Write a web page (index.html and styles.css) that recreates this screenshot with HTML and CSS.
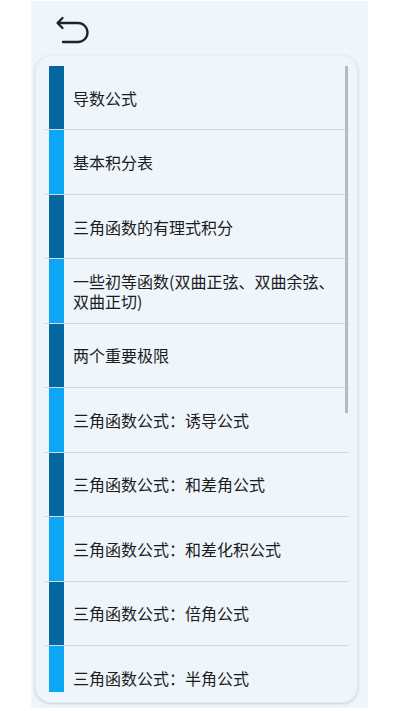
FILE: index.html
```html
<!DOCTYPE html>
<html lang="zh">
<head>
<meta charset="utf-8">
<link rel="stylesheet" href="styles.css">
</head>
<body>
<div class="app">
  <div class="header">
    <svg class="back" width="34" height="30" viewBox="0 0 34 30">
      <path d="M7.5 3 L2.5 8 L7.5 13 M3 8 H23 A9.5 9.5 0 0 1 23 27 H8" fill="none" stroke="#222" stroke-width="2.3" stroke-linecap="round" stroke-linejoin="round"/>
    </svg>
  </div>
  <div class="card">
    <div class="list">
      <div class="row"><span class="bar dark"></span><span class="label">导数公式</span></div>
      <div class="row"><span class="bar light"></span><span class="label">基本积分表</span></div>
      <div class="row"><span class="bar dark"></span><span class="label">三角函数的有理式积分</span></div>
      <div class="row"><span class="bar light"></span><span class="label">一些初等函数(双曲正弦、双曲余弦、双曲正切)</span></div>
      <div class="row"><span class="bar dark"></span><span class="label">两个重要极限</span></div>
      <div class="row"><span class="bar light"></span><span class="label">三角函数公式：诱导公式</span></div>
      <div class="row"><span class="bar dark"></span><span class="label">三角函数公式：和差角公式</span></div>
      <div class="row"><span class="bar light"></span><span class="label">三角函数公式：和差化积公式</span></div>
      <div class="row"><span class="bar dark"></span><span class="label">三角函数公式：倍角公式</span></div>
      <div class="row"><span class="bar light"></span><span class="label">三角函数公式：半角公式</span></div>
      <div class="scroll"></div>
    </div>
  </div>
</div>
</body>
</html>
```
FILE: styles.css
```css
html, body {
  margin: 0;
  padding: 0;
  background: #ffffff;
}
body {
  font-family: "Noto Sans CJK SC", "Noto Sans", sans-serif;
  color: #1c1c1c;
}
.app {
  width: 337px;
  height: 707px;
  margin: 1px auto 0 31px;
  background: #eef5fb;
  display: flex;
  flex-direction: column;
  overflow: hidden;
}
.header {
  height: 54px;
  padding: 14px 0 0 24px;
  box-sizing: border-box;
  display: flex;
  align-items: flex-start;
}
.back {
  display: block;
}
.card {
  margin: 0 10px 0 4px;
  height: 648px;
  box-sizing: border-box;
  border-radius: 16px;
  background: #eef5fb;
  border: 1px solid #e6edf3;
  box-shadow: 0 1px 3px rgba(0, 0, 0, 0.16);
  padding: 10px 8px 10px 9px;
  overflow: hidden;
}
.list {
  position: relative;
  height: 626px;
  overflow: hidden;
}
.row {
  display: flex;
  align-items: stretch;
  height: 64.44px;
  box-sizing: border-box;
  border-bottom: 1px solid #d2d9df;
  padding-left: 4px;
}
.bar {
  flex: 0 0 15px;
  width: 15px;
}
.bar.dark { background: #0467a2; }
.bar.light { background: #0da6f6; }
.label {
  flex: 1;
  display: flex;
  align-items: center;
  padding: 0 10px 0 9px;
  font-size: 16px;
  line-height: 20px;
  color: #1c1c1c;
}
.scroll {
  position: absolute;
  top: 0;
  right: 1px;
  width: 3.5px;
  height: 347px;
  background: #b7bbbe;
}
```
